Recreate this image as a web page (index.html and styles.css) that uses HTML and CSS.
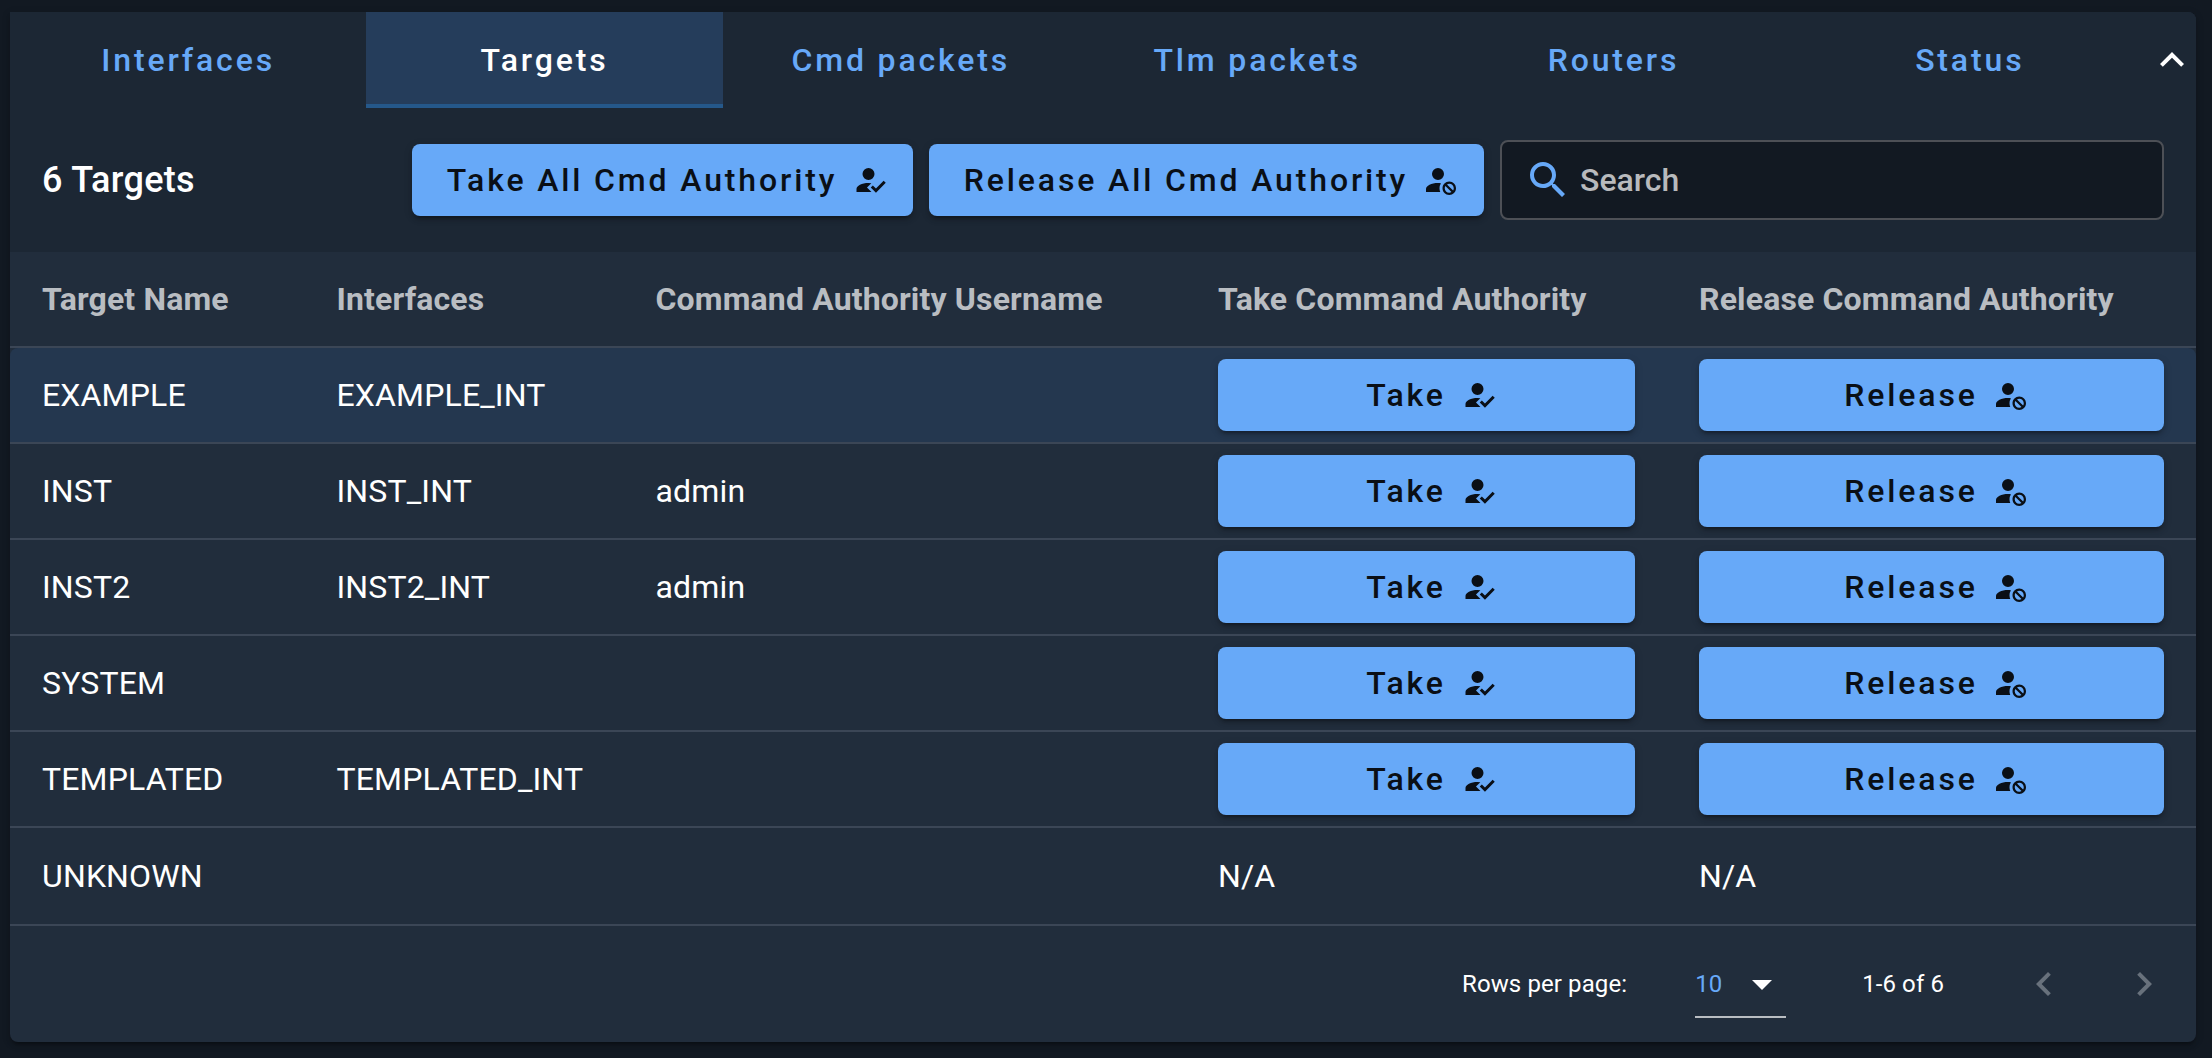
FILE: index.html
```html
<!DOCTYPE html>
<html lang="en">
<head>
<meta charset="utf-8">
<title>Targets</title>
<link rel="stylesheet" href="styles.css">
</head>
<body>
<svg class="sprite" aria-hidden="true">
  <symbol id="account-check" viewBox="0 0 24 24"><path d="M21.1,12.5L22.5,13.91L15.97,20.5L12.5,17L13.9,15.59L15.97,17.67L21.1,12.5M10,17L13,20H3V18C3,15.79 6.58,14 11,14L12.89,14.11L10,17M11,4A4,4 0 0,1 15,8A4,4 0 0,1 11,12A4,4 0 0,1 7,8A4,4 0 0,1 11,4Z"/></symbol>
  <symbol id="account-cancel" viewBox="0 0 24 24"><path d="M10 4A4 4 0 0 0 6 8A4 4 0 0 0 10 12A4 4 0 0 0 14 8A4 4 0 0 0 10 4M17.5 13C15 13 13 15 13 17.5C13 20 15 22 17.5 22C20 22 22 20 22 17.5C22 15 20 13 17.5 13M10 14C5.58 14 2 15.79 2 18V20H11.5A6.5 6.5 0 0 1 11 17.5A6.5 6.5 0 0 1 11.95 14.14C11.32 14.06 10.68 14 10 14M17.5 14.5C19.16 14.5 20.5 15.84 20.5 17.5C20.5 18.06 20.35 18.58 20.08 19L16 14.92C16.42 14.65 16.94 14.5 17.5 14.5M14.92 16L19 20.08C18.58 20.35 18.06 20.5 17.5 20.5C15.84 20.5 14.5 19.16 14.5 17.5C14.5 16.94 14.65 16.42 14.92 16Z"/></symbol>
</svg>
<main class="panel">
  <nav class="tabs">
    <a class="tab">Interfaces</a>
    <a class="tab tab-active">Targets</a>
    <a class="tab">Cmd packets</a>
    <a class="tab">Tlm packets</a>
    <a class="tab">Routers</a>
    <a class="tab">Status</a>
    <svg class="icon-lg collapse" viewBox="0 0 24 24"><path d="M7.41,15.41L12,10.83L16.59,15.41L18,14L12,8L6,14L7.41,15.41Z"/></svg>
  </nav>
  <header class="toolbar">
    <h1 class="title">6 Targets</h1>
    <button class="btn btn-take-all">Take All Cmd Authority<svg class="icon"><use href="#account-check"/></svg></button>
    <button class="btn btn-release-all">Release All Cmd Authority<svg class="icon"><use href="#account-cancel"/></svg></button>
    <div class="search">
      <svg class="icon-lg" viewBox="0 0 24 24"><path d="M9.5,3A6.5,6.5 0 0,1 16,9.5C16,11.11 15.41,12.59 14.44,13.73L14.71,14H15.5L20.5,19L19,20.5L14,15.5V14.71L13.73,14.44C12.59,15.41 11.11,16 9.5,16A6.5,6.5 0 0,1 3,9.5A6.5,6.5 0 0,1 9.5,3M9.5,5C7,5 5,7 5,9.5C5,12 7,14 9.5,14C12,14 14,12 14,9.5C14,7 12,5 9.5,5Z"/></svg>
      <span class="search-label">Search</span>
    </div>
  </header>
  <section class="table">
    <div class="row row-head"><span>Target Name</span><span>Interfaces</span><span>Command Authority Username</span><span>Take Command Authority</span><span>Release Command Authority</span></div>
    <div class="row row-hover"><span>EXAMPLE</span><span>EXAMPLE_INT</span><span></span>
      <button class="btn">Take<svg class="icon"><use href="#account-check"/></svg></button>
      <button class="btn">Release<svg class="icon"><use href="#account-cancel"/></svg></button></div>
    <div class="row"><span>INST</span><span>INST_INT</span><span>admin</span>
      <button class="btn">Take<svg class="icon"><use href="#account-check"/></svg></button>
      <button class="btn">Release<svg class="icon"><use href="#account-cancel"/></svg></button></div>
    <div class="row"><span>INST2</span><span>INST2_INT</span><span>admin</span>
      <button class="btn">Take<svg class="icon"><use href="#account-check"/></svg></button>
      <button class="btn">Release<svg class="icon"><use href="#account-cancel"/></svg></button></div>
    <div class="row"><span>SYSTEM</span><span></span><span></span>
      <button class="btn">Take<svg class="icon"><use href="#account-check"/></svg></button>
      <button class="btn">Release<svg class="icon"><use href="#account-cancel"/></svg></button></div>
    <div class="row"><span>TEMPLATED</span><span>TEMPLATED_INT</span><span></span>
      <button class="btn">Take<svg class="icon"><use href="#account-check"/></svg></button>
      <button class="btn">Release<svg class="icon"><use href="#account-cancel"/></svg></button></div>
    <div class="row row-last"><span>UNKNOWN</span><span></span><span></span><span>N/A</span><span>N/A</span></div>
  </section>
  <footer class="pager">
    <span class="pager-label">Rows per page:</span>
    <div class="select"><span class="select-value">10</span><svg class="icon-lg" viewBox="0 0 24 24"><path d="M7,10L12,15L17,10H7Z"/></svg></div>
    <span class="pager-range">1-6 of 6</span>
    <svg class="icon-lg page-prev" viewBox="0 0 24 24"><path d="M15.41,16.58L10.83,12L15.41,7.41L14,6L8,12L14,18L15.41,16.58Z"/></svg>
    <svg class="icon-lg page-next" viewBox="0 0 24 24"><path d="M8.59,16.58L13.17,12L8.59,7.41L10,6L16,12L10,18L8.59,16.58Z"/></svg>
  </footer>
</main>
</body>
</html>
```
FILE: styles.css
```css
* { box-sizing: border-box; }

body {
  margin: 0;
  height: 1058px;
  overflow: hidden;
  padding: 12px 16px 16px 10px;
  background: #121922;
  color: #fff;
  font: 400 32px/1.25 Roboto, sans-serif;
}

svg { fill: currentColor; display: block; flex: none; }
.sprite { display: none; }
.icon { width: 36px; height: 36px; }
.icon-lg { width: 48px; height: 48px; }

.panel {
  height: 1030px;
  border-radius: 0 8px 8px 8px;
  background: #212d3c;
  box-shadow: 0 6px 2px -4px rgba(0, 0, 0, .2), 0 4px 4px rgba(0, 0, 0, .14), 0 2px 10px rgba(0, 0, 0, .12);
}

.tabs {
  display: flex;
  align-items: center;
  height: 96px;
  background: #1c2734;
  border-radius: 0 8px 0 0;
}
.tab {
  flex: 1 1 0;
  height: 96px;
  padding-top: 4px;
  display: flex;
  align-items: center;
  justify-content: center;
  border-bottom: 4px solid transparent;
  color: #67a9f8;
  font-weight: 500;
  letter-spacing: .0892857em;
}
.tab-active {
  background: #253d5b;
  border-bottom-color: #25588a;
  color: #fff;
}

.toolbar {
  display: flex;
  align-items: center;
  gap: 16px;
  height: 144px;
  padding: 0 32px;
  background: #1c2734;
}
.title {
  flex: 1;
  margin: 0;
  font-size: 36px;
  font-weight: 500;
  letter-spacing: .3px;
}
.btn {
  height: 72px;
  padding: 0 0 0 10px;
  display: flex;
  align-items: center;
  justify-content: center;
  gap: 15px;
  border: 0;
  border-radius: 8px;
  background: #67a9f8;
  color: #0a0f16;
  font: 500 32px/1 Roboto, sans-serif;
  letter-spacing: .0892857em;
  white-space: nowrap;
  box-shadow: 0 6px 2px -4px rgba(0, 0, 0, .2), 0 4px 4px rgba(0, 0, 0, .14), 0 2px 10px rgba(0, 0, 0, .12);
}
.btn-take-all { width: 501px; }
.btn-release-all { width: 555px; }
.search {
  width: 664px;
  height: 80px;
  padding-left: 22px;
  display: flex;
  align-items: center;
  gap: 8px;
  border: 2px solid #4d5056;
  border-radius: 8px;
  background: #121922;
  color: #67a9f8;
}
.search-label { color: #b8babd; font-weight: 500; }

.row {
  display: grid;
  grid-template-columns: 230.5px 255px 498.5px 417px 465px;
  column-gap: 64px;
  align-items: center;
  height: 96px;
  padding: 0 32px;
  border-bottom: 2px solid #3b4656;
  letter-spacing: .15px;
}
.row-head { color: #b9bdc2; font-weight: 700; }
.row-hover { background: #24374f; border-radius: 8px 8px 0 0; }
.row-last { height: 98px; }

.pager {
  display: flex;
  align-items: center;
  height: 116px;
  padding-right: 28px;
  font-size: 24px;
  letter-spacing: .1px;
}
.pager-label { margin-left: auto; }
.select {
  display: flex;
  align-items: center;
  justify-content: space-between;
  width: 91px;
  height: 66px;
  margin: 2px 76px 0 68px;
  border-bottom: 2px solid #b9bdc2;
}
.select-value { color: #67a9f8; }
.page-prev, .page-next { color: #68717c; }
.page-prev { margin: 0 52px 0 76px; }
```
